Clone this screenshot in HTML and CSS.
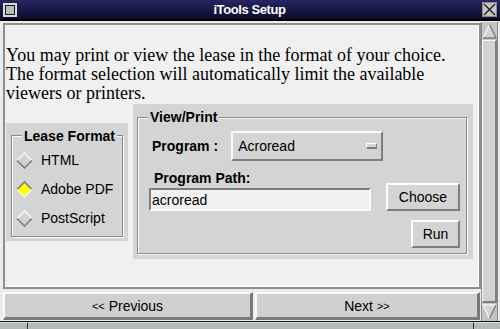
FILE: index.html
```html
<!DOCTYPE html>
<html lang="en">
<head>
    <meta charset="UTF-8">
    <title>iTools Setup</title>
    <link rel="stylesheet" href="styles.css">
</head>
<body>
    <div class="window">
        <div class="titlebar">
            <span class="menu-btn"><span></span></span>
            <span class="title">iTools Setup</span>
            <span class="close-btn">
                <svg width="13" height="13" viewBox="0 0 13 13"><path d="M1 1L12 12M12 1L1 12" stroke="#1a1a1a" stroke-width="1.3"/></svg>
            </span>
        </div>

        <div class="main">
            <div class="pane">
                <div class="content">
                    <p class="intro">You may print or view the lease in the format of your choice.<br>The format selection will automatically limit the available<br>viewers or printers.</p>

                    <div class="panels">
                        <div class="box lease">
                            <fieldset>
                                <legend>Lease Format</legend>
                                <div class="radio">
                                    <svg class="diamond" width="17" height="17" viewBox="0 0 17 17">
                                        <polygon points="8.5,1 16,8.5 8.5,16 1,8.5" fill="#d2d2d2"/>
                                        <polyline points="1,8.5 8.5,1 16,8.5" fill="none" stroke="#f6f6f6" stroke-width="1.6"/>
                                        <polyline points="1,8.5 8.5,16 16,8.5" fill="none" stroke="#7e7e7e" stroke-width="1.6"/>
                                    </svg>
                                    HTML
                                </div>
                                <div class="radio">
                                    <svg class="diamond" width="17" height="17" viewBox="0 0 17 17">
                                        <polygon points="8.5,1 16,8.5 8.5,16 1,8.5" fill="#ffff00"/>
                                        <polyline points="1,8.5 8.5,1 16,8.5" fill="none" stroke="#7e7e7e" stroke-width="1.6"/>
                                        <polyline points="1,8.5 8.5,16 16,8.5" fill="none" stroke="#f6f6f6" stroke-width="1.6"/>
                                    </svg>
                                    Adobe PDF
                                </div>
                                <div class="radio">
                                    <svg class="diamond" width="17" height="17" viewBox="0 0 17 17">
                                        <polygon points="8.5,1 16,8.5 8.5,16 1,8.5" fill="#d2d2d2"/>
                                        <polyline points="1,8.5 8.5,1 16,8.5" fill="none" stroke="#f6f6f6" stroke-width="1.6"/>
                                        <polyline points="1,8.5 8.5,16 16,8.5" fill="none" stroke="#7e7e7e" stroke-width="1.6"/>
                                    </svg>
                                    PostScript
                                </div>
                            </fieldset>
                        </div>

                        <div class="box view">
                            <fieldset>
                                <legend>View/Print</legend>
                                <div class="prog-row">
                                    <span class="label">Program :</span>
                                    <div class="dropdown">
                                        <span>Acroread</span>
                                        <span class="indicator"></span>
                                    </div>
                                </div>
                                <div class="path-grid">
                                    <div class="path-col">
                                        <span class="label path-label">Program Path:</span>
                                        <div class="entry">acroread</div>
                                    </div>
                                    <div class="btn choose">Choose</div>
                                    <div class="btn run">Run</div>
                                </div>
                            </fieldset>
                        </div>
                    </div>
                </div>

                <div class="nav">
                    <div class="nav-btn prev"><small>&lt;&lt;</small>&nbsp;Previous</div>
                    <div class="nav-btn next">Next&nbsp;<small>&gt;&gt;</small></div>
                </div>
            </div>

            <div class="scrollbar">
                <div class="arrow">
                    <svg width="15" height="16" viewBox="0 0 15 16">
                        <polygon points="7.5,1.5 14,15 1,15" fill="#d2d2d2"/>
                        <polyline points="1,15 7.5,1.5" fill="none" stroke="#f6f6f6" stroke-width="1.3"/>
                        <polyline points="7.5,1.5 14,15 1,15" fill="none" stroke="#7a7a7a" stroke-width="1.3"/>
                    </svg>
                </div>
                <div class="thumb"></div>
                <div class="arrow">
                    <svg width="15" height="16" viewBox="0 0 15 16">
                        <polygon points="1,1 14,1 7.5,14.5" fill="#d2d2d2"/>
                        <polyline points="7.5,14.5 1,1 14,1" fill="none" stroke="#f6f6f6" stroke-width="1.3"/>
                        <polyline points="14,1 7.5,14.5" fill="none" stroke="#7a7a7a" stroke-width="1.3"/>
                    </svg>
                </div>
            </div>
        </div>

        <div class="status">
            <span class="cell first"></span>
            <span class="cell middle"></span>
            <span class="cell last"></span>
        </div>
    </div>
</body>
</html>
```

FILE: styles.css
```css
* {
    box-sizing: border-box;
}

body {
    margin: 0;
    font-family: "Liberation Sans", Arial, sans-serif;
    font-size: 14px;
    color: #000;
}

.window {
    width: 500px;
    height: 329px;
    background-color: #ececec;
    overflow: hidden;
}

/* title bar */

.titlebar {
    height: 21px;
    padding: 0 3px;
    display: flex;
    align-items: center;
    background: linear-gradient(#262664, #0c0c2a);
    border-bottom: 2px solid #000;
}

.titlebar .menu-btn {
    width: 14px;
    height: 14px;
    border: 2px solid #d8d8d8;
    background-color: #bcbcbc;
    display: flex;
}

.titlebar .menu-btn span {
    flex: 1;
    border: 1px solid #1a1a1a;
}

.titlebar .title {
    flex: 1;
    text-align: center;
    color: #fff;
    font-weight: bold;
    font-size: 13px;
    letter-spacing: -0.4px;
}

.titlebar .close-btn {
    width: 15px;
    height: 15px;
    background-color: #c4c4c4;
    border: 1px solid #8a8a8a;
    display: flex;
    align-items: center;
    justify-content: center;
}

/* main area */

.main {
    margin-top: 1px;
    height: 299px;
    display: flex;
}

.pane {
    width: 481px;
    padding-left: 3px;
    display: flex;
    flex-direction: column;
}

.content {
    margin-top: 1px;
    height: 266px;
    background-color: #f0f0f0;
    border: 2px solid #8e8e8e;
    box-shadow: inset -1px -1px 0 #fff;
    padding-left: 1px;
}

.intro {
    margin: 21px 0 0 0;
    font-family: "Liberation Serif", "Times New Roman", serif;
    font-size: 18px;
    line-height: 19px;
    white-space: nowrap;
}

.panels {
    margin-top: 1px;
    display: flex;
    align-items: center;
    gap: 5px;
}

.box {
    background-color: #d4d4d4;
}

.box fieldset {
    margin: 0;
    padding: 0;
    min-width: 0;
    border: 1px solid #8a8a8a;
    box-shadow: inset 1px 1px 0 #fbfbfb, 1px 1px 0 #fbfbfb;
}

.box legend {
    padding: 0 2px;
    font-weight: bold;
    font-size: 14px;
    line-height: 16px;
    background-color: #d4d4d4;
}

/* lease format */

.lease {
    width: 122px;
    padding: 5px 5px 4px 5px;
}

.lease legend {
    margin-left: 6px;
}

.lease fieldset {
    padding: 2px 0 3px 4px;
}

.radio {
    height: 29px;
    display: flex;
    align-items: center;
    gap: 8px;
}

.diamond {
    display: block;
}

/* view / print */

.view {
    width: 340px;
    padding: 5px 6px 5px 4px;
}

.view legend {
    margin-left: 10px;
}

.view fieldset {
    padding: 0 0 5px 0;
}

.label {
    font-weight: bold;
    line-height: 16px;
}

.prog-row {
    margin: 6px 0 0 14px;
    display: flex;
    align-items: center;
}

.dropdown {
    margin-left: 13px;
    width: 152px;
    height: 30px;
    padding: 0 4px 0 5px;
    display: flex;
    align-items: center;
    background-color: #d4d4d4;
    border: 2px solid;
    border-color: #fbfbfb #7e7e7e #7e7e7e #fbfbfb;
}

.dropdown .indicator {
    margin-left: auto;
    width: 11px;
    height: 6px;
    border: 1px solid;
    border-color: #fbfbfb #7e7e7e #7e7e7e #fbfbfb;
    border-bottom-width: 2px;
}

.path-grid {
    margin: 9px 0 0 11px;
    display: grid;
    grid-template-columns: 222px 74px;
    column-gap: 15px;
}

.path-col {
    display: flex;
    flex-direction: column;
}

.path-label {
    margin-left: 5px;
}

.entry {
    margin-top: 2px;
    height: 23px;
    padding-left: 1px;
    display: flex;
    align-items: center;
    background-color: #f0f0f0;
    border: 2px solid;
    border-color: #7e7e7e #fbfbfb #fbfbfb #7e7e7e;
}

.btn {
    height: 28px;
    display: flex;
    align-items: center;
    justify-content: center;
    background-color: #d4d4d4;
    border: 2px solid;
    border-color: #fbfbfb #7e7e7e #7e7e7e #fbfbfb;
}

.choose {
    align-self: end;
}

.run {
    grid-column: 2;
    width: 49px;
    justify-self: end;
    margin-top: 9px;
}

/* bottom navigation */

.nav {
    margin-top: 3px;
    height: 28px;
    display: flex;
    gap: 2px;
}

.nav-btn {
    display: flex;
    align-items: center;
    justify-content: center;
    background-color: #d0d0d0;
    border-style: solid;
    border-width: 2px 3px 3px 2px;
    border-color: #fafafa #7a7a7a #7a7a7a #fafafa;
}

.nav-btn small {
    font-size: 11px;
}

.prev {
    width: 250px;
}

.next {
    width: 225px;
}

/* scrollbar */

.scrollbar {
    width: 17px;
    display: flex;
    flex-direction: column;
    background-color: #c4c4c4;
    border-left: 1px solid #8a8a8a;
    border-right: 1px solid #8a8a8a;
    padding: 1px 0;
}

.scrollbar .arrow {
    height: 16px;
    display: flex;
    justify-content: center;
}

.scrollbar .thumb {
    flex: 1;
    margin: 1px 0;
    background-color: #d2d2d2;
    border-style: solid;
    border-width: 1px 2px 2px 1px;
    border-color: #fafafa #7e7e7e #7e7e7e #fafafa;
}

/* status strip */

.status {
    height: 8px;
    display: flex;
    border-top: 1px solid #111;
    background-color: #b4bab6;
}

.status .cell {
    border-right: 1px solid #333;
    border-top: 1px solid #dde2de;
}

.status .first {
    width: 28px;
}

.status .middle {
    width: 446px;
}

.status .last {
    flex: 1;
    border-right: none;
}
```
